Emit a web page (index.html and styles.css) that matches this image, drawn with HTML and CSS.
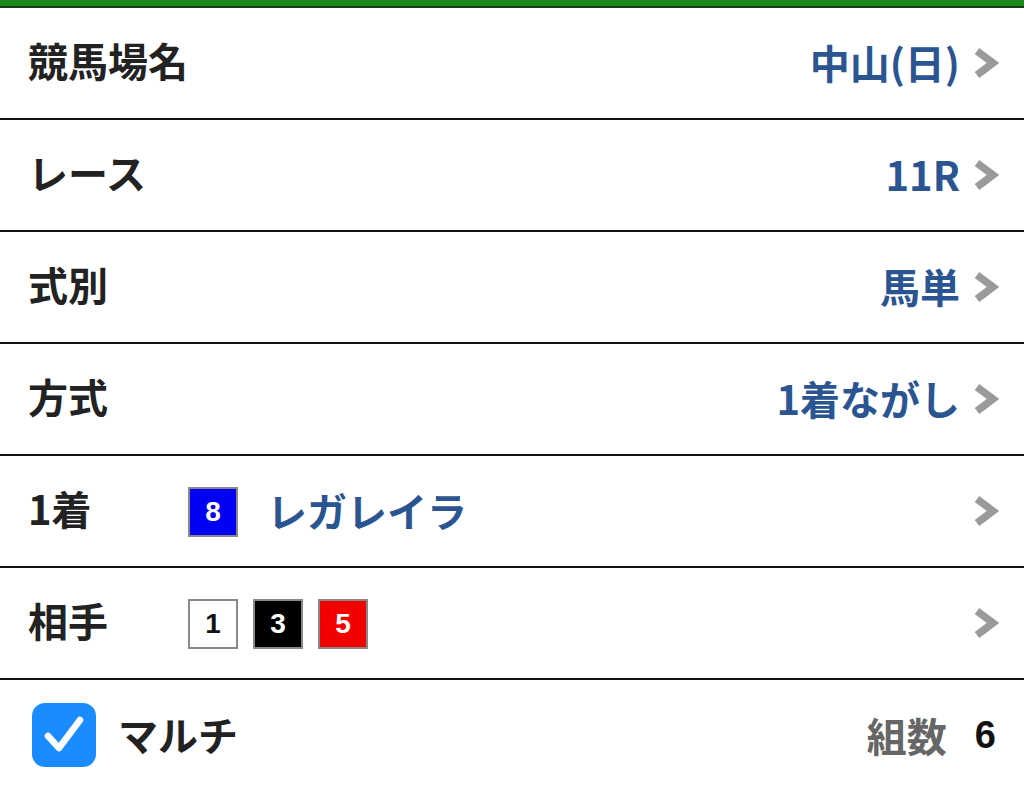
FILE: index.html
```html
<!DOCTYPE html>
<html lang="ja">
<head>
<meta charset="utf-8">
<link rel="stylesheet" href="styles.css">
</head>
<body>
<div class="topbar"></div>
<div class="list">
  <div class="row">
    <div class="label">競馬場名</div>
    <div class="value">中山(日)</div>
    <svg class="chev" viewBox="0 0 26 30"><polyline points="4,3 20,15 4,27"/></svg>
  </div>
  <div class="row">
    <div class="label">レース</div>
    <div class="value">11R</div>
    <svg class="chev" viewBox="0 0 26 30"><polyline points="4,3 20,15 4,27"/></svg>
  </div>
  <div class="row">
    <div class="label">式別</div>
    <div class="value">馬単</div>
    <svg class="chev" viewBox="0 0 26 30"><polyline points="4,3 20,15 4,27"/></svg>
  </div>
  <div class="row">
    <div class="label">方式</div>
    <div class="value">1着ながし</div>
    <svg class="chev" viewBox="0 0 26 30"><polyline points="4,3 20,15 4,27"/></svg>
  </div>
  <div class="row">
    <div class="label short">1着</div>
    <div class="horses">
      <span class="num blue">8</span>
      <span class="hname">レガレイラ</span>
    </div>
    <svg class="chev" viewBox="0 0 26 30"><polyline points="4,3 20,15 4,27"/></svg>
  </div>
  <div class="row">
    <div class="label short">相手</div>
    <div class="horses">
      <span class="num white">1</span>
      <span class="num black">3</span>
      <span class="num red">5</span>
    </div>
    <svg class="chev" viewBox="0 0 26 30"><polyline points="4,3 20,15 4,27"/></svg>
  </div>
  <div class="row last">
    <div class="multi">
      <svg class="check" viewBox="0 0 64 64"><rect x="0" y="0" width="64" height="64" rx="13" fill="#1a8cff"/><polyline points="16,33 27,45 48,17" fill="none" stroke="#fff" stroke-width="6.5" stroke-linecap="round" stroke-linejoin="round"/></svg>
      <span class="label">マルチ</span>
    </div>
    <div class="count"><span class="clabel">組数</span><span class="cnum">6</span></div>
  </div>
</div>
</body>
</html>
```
FILE: styles.css
```css
* { box-sizing: border-box; }
html, body { margin: 0; padding: 0; background: #fff; }
body {
  font-family: "Noto Sans CJK JP", "Liberation Sans", sans-serif;
  font-weight: 700;
  width: 1024px;
  height: 790px;
  overflow: hidden;
}
.topbar {
  height: 8px;
  background: #1b8a1b;
  border-bottom: 2px solid #123d12;
}
.list { display: flex; flex-direction: column; }
.row {
  height: 112px;
  border-bottom: 2px solid #111;
  display: flex;
  align-items: center;
  padding: 0 25px 0 28px;
}
.row.last { border-bottom: none; height: 110px; justify-content: space-between; padding-left: 32px; padding-right: 28px; }
.label {
  font-size: 40px;
  color: #222;
  line-height: 1;
  margin-top: -6px;
}
.label.short { width: 160px; flex: none; }
.value {
  margin-left: auto;
  font-size: 40px;
  color: #2b5590;
  line-height: 1;
  margin-top: -2px;
}
.chev {
  width: 26px;
  height: 30px;
  margin-left: 13px;
  flex: none;
}
.chev polyline { fill: none; stroke: #9a9a9a; stroke-width: 7.5; stroke-linejoin: miter; }
.horses {
  display: flex;
  align-items: center;
  gap: 15px;
  flex: 1;
  margin-top: 2px;
}
.num {
  width: 50px;
  height: 50px;
  border: 2px solid #888;
  display: flex;
  align-items: center;
  justify-content: center;
  font-family: "Liberation Sans", sans-serif;
  font-weight: 700;
  font-size: 28px;
  line-height: 1;
}
.num.blue { background: #0000f5; color: #fff; }
.num.white { background: #fff; color: #111; }
.num.black { background: #000; color: #fff; }
.num.red { background: #f50000; color: #fff; }
.hname {
  margin-left: 14px;
  font-size: 40px;
  color: #2b5590;
  line-height: 1;
  margin-top: -4px;
}
.multi { display: flex; align-items: center; }
.check { width: 64px; height: 64px; margin-right: 22px; }
.multi .label { margin-top: -2px; }
.count { display: flex; align-items: center; font-size: 40px; line-height: 1; }
.clabel { color: #666; }
.cnum { color: #111; margin-left: 28px; font-family: "Liberation Sans", sans-serif; font-size: 38px; }
```
